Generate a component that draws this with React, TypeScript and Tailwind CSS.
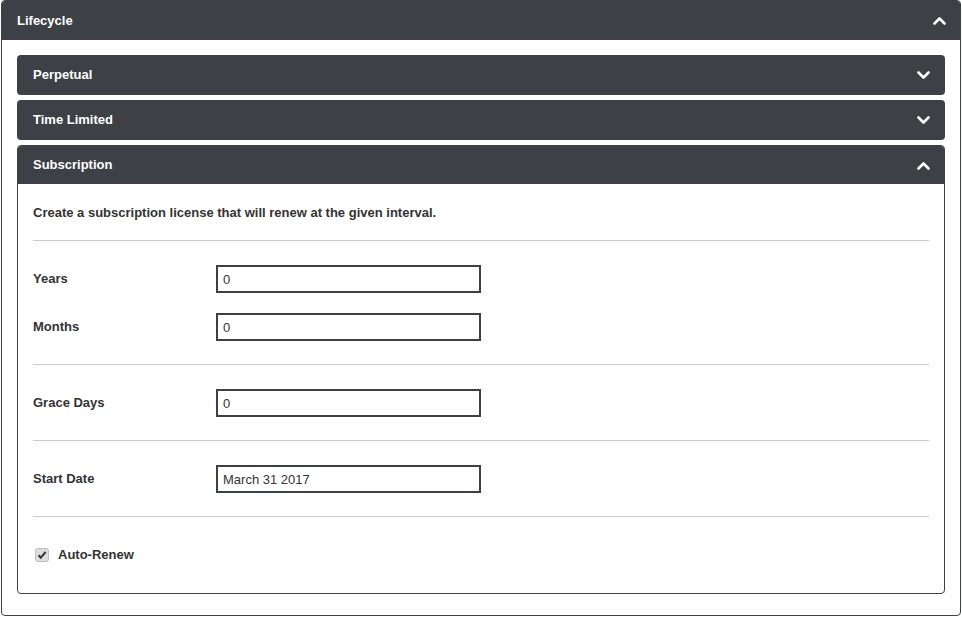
const font = { fontFamily: '"Liberation Sans", Arial, sans-serif' };

const Chevron = ({ up }: { up?: boolean }) => (
  <svg width="13" height="9" viewBox="0 0 13 9" className="block">
    <polyline
      points={up ? "1.5,7.5 6.5,2.5 11.5,7.5" : "1.5,1.5 6.5,6.5 11.5,1.5"}
      fill="none"
      stroke="#fff"
      strokeWidth="2.6"
      strokeLinecap="round"
      strokeLinejoin="round"
    />
  </svg>
);

const ClosedPanel = ({ title }: { title: string }) => (
  <div className="h-10 bg-[#3d4146] rounded-[4px] flex items-center justify-between pl-4 pr-[15px]">
    <span className="text-white font-bold text-[13px]">{title}</span>
    <Chevron />
  </div>
);

const Field = ({ label, value, className = "" }: { label: string; value: string; className?: string }) => (
  <div className={`flex items-center ${className}`}>
    <label className="w-[183px] font-bold text-[13px] text-[#333]">{label}</label>
    <input
      readOnly
      value={value}
      className="w-[265px] h-[28px] border-2 border-[#3d4146] px-[5px] text-[13px] text-[#333] outline-none"
      style={font}
    />
  </div>
);

const Divider = ({ className = "" }: { className?: string }) => (
  <div className={`h-px bg-[#ccc] ${className}`} />
);

export default function App() {
  return (
    <div className="bg-white w-[962px] h-[618px]" style={font}>
      <div className="ml-px w-[960px] h-[616px] border border-[#3d4146] rounded-[4px] overflow-hidden">
        <div className="h-[39px] bg-[#3d4146] flex items-center justify-between pl-[15px] pr-[14px]">
          <span className="text-white font-bold text-[13px]">Lifecycle</span>
          <Chevron up />
        </div>
        <div className="px-[15px] pt-[15px] flex flex-col gap-[5px]">
          <ClosedPanel title="Perpetual" />
          <ClosedPanel title="Time Limited" />
          <div className="border border-[#3d4146] rounded-[4px] overflow-hidden">
            <div className="h-[38px] bg-[#3d4146] flex items-center justify-between pl-[15px] pr-[14px]">
              <span className="text-white font-bold text-[13px]">Subscription</span>
              <Chevron up />
            </div>
            <div className="px-[15px] pt-[20px] pb-[29px] text-[13px] text-[#333]">
              <p className="font-bold leading-[18px]">
                Create a subscription license that will renew at the given interval.
              </p>
              <Divider className="mt-[18px]" />
              <Field label="Years" value="0" className="mt-[24px]" />
              <Field label="Months" value="0" className="mt-[20px]" />
              <Divider className="mt-[23px]" />
              <Field label="Grace Days" value="0" className="mt-[24px]" />
              <Divider className="mt-[23px]" />
              <Field label="Start Date" value="March 31 2017" className="mt-[24px]" />
              <Divider className="mt-[23px]" />
              <div className="mt-[29px] flex items-center h-[18px]">
                <span className="ml-[2px] w-[14px] h-[14px] rounded-[3px] bg-[#dedede] border border-[#bdbdbd] flex items-center justify-center">
                  <svg width="10" height="10" viewBox="0 0 10 10">
                    <polyline points="1.5,5.2 3.8,7.6 8.6,2" fill="none" stroke="#3a3a3a" strokeWidth="2.1" />
                  </svg>
                </span>
                <span className="ml-[9px] font-bold">Auto-Renew</span>
              </div>
            </div>
          </div>
        </div>
      </div>
    </div>
  );
}
